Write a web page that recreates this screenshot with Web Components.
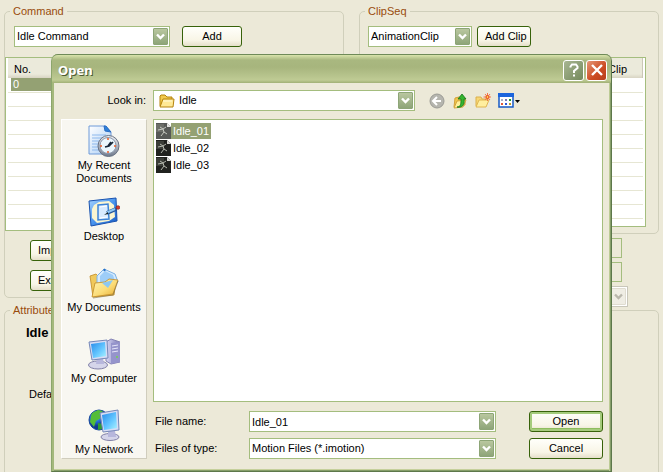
<!DOCTYPE html>
<html lang="en">
<head>
<meta charset="utf-8">
<title>Open</title>
<style>
html,body{margin:0;height:100%;background:#ece9d8}
body{font:11px/13px "Liberation Sans",Arial,sans-serif;color:#000;overflow:hidden}
</style>
</head>
<body>
<clip-editor></clip-editor>
<script>
const define=(name,html,setup)=>{
  const t=document.createElement('template');
  t.innerHTML='<style>*{box-sizing:border-box}:host{box-sizing:border-box}</style>'+html;
  customElements.define(name,class extends HTMLElement{
    constructor(){super();this.attachShadow({mode:'open'}).append(t.content.cloneNode(true));}
    connectedCallback(){if(setup&&!this.ready){this.ready=true;setup(this,this.shadowRoot);}}
  });
};

const ICONS={
recent:`<svg viewBox="0 0 32 32" width="32" height="32"><defs><linearGradient id="a" x2="1" y2="1"><stop stop-color="#fff"/><stop offset="1" stop-color="#a9cdf5"/></linearGradient><linearGradient id="b" x2="0" y2="1"><stop stop-color="#f4f5f8"/><stop offset="1" stop-color="#6f7a8c"/></linearGradient></defs>
<path d="M1 1h16l6 6v22H1z" fill="url(#a)" stroke="#6f9ad8"/><path d="M16 1h2l5 6-6-1z" fill="#2f80d8" stroke="#2a6cc4"/><path d="M4 10h14M4 13h11M4 16h7M4 19h6M4 22h6M4 25h7" stroke="#8db8ec"/>
<circle cx="20.500" cy="21" r="10.500" fill="url(#b)" stroke="#687182"/><circle cx="20" cy="20.500" r="8" fill="#eaf6fd" stroke="#8793a7"/><path d="M20 13v2M20 26v2M12 21h2M26 21h2" stroke="#ee5a22" stroke-width="1.500"/><path d="M17 22l4-1 4-4M20 21l3-4" stroke="#172637" stroke-width="1.700" fill="none"/></svg>`,
desktop:`<svg viewBox="0 0 32 32" width="32" height="32"><defs><linearGradient id="a" x2="1" y2="1"><stop stop-color="#a8d5ff"/><stop offset=".5" stop-color="#4a95ee"/><stop offset="1" stop-color="#1558c2"/></linearGradient></defs>
<path d="M1 5L28 2l1 23-26 5z" fill="url(#a)" stroke="#1a53af"/><path d="M6 9l5-3 10-1 5 4 1 12-6 4-12 2-5-5V13z" fill="#fbf6d1"/><path d="M10 9l10-1 1 15-11 1z" fill="#d7ebff" stroke="#3c84d7" stroke-width="1.500"/><path d="M12 11l7-1M12 22l7-1" stroke="#fff"/><path d="M19 17l9-4" stroke="#24569b" stroke-width="4"/><path d="M19 16.500l8-3.500" stroke="#8ec6f3" stroke-width="2"/><path d="M16 19l4-3v2z" fill="#112222"/><circle cx="30" cy="11.500" r="1.800" fill="#d63b2c" stroke="#87221c" stroke-width=".7"/></svg>`,
docs:`<svg viewBox="0 0 32 32" width="32" height="32"><defs><linearGradient id="a" x2="1" y2="1"><stop stop-color="#fff5b5"/><stop offset=".55" stop-color="#fbdc77"/><stop offset="1" stop-color="#e5aa2e"/></linearGradient></defs>
<path d="M2 9l6-2 3 3 17 2-2 16-21 2z" fill="#f0c95c" stroke="#c28a24" stroke-width=".8"/><path d="M9 9l7-7 11 5 3 8-13 8-8-7z" fill="#d5ebff" stroke="#7db1e4"/><path d="M12 9l5-5 8 4 2 6-9 6-6-5z" fill="#9dcdf8"/><circle cx="16.500" cy="3" r="1.200" fill="#2771c8"/><path d="M4 30l3-14 10-1 4-3 9 1-5 14z" fill="url(#a)" stroke="#c28a24" stroke-width=".8"/><path d="M14 16l11-3-5 8z" fill="#8cc8f3"/><path d="M5 31l20-3 5-14" fill="none" stroke="#807349" opacity=".6"/></svg>`,
computer:`<svg viewBox="0 0 32 32" width="32" height="32"><defs><linearGradient id="a" x2="1" y2="1"><stop stop-color="#278be9"/><stop offset=".55" stop-color="#63c5ff"/><stop offset="1" stop-color="#aaf2ff"/></linearGradient><linearGradient id="b"><stop stop-color="#d9d8f5"/><stop offset="1" stop-color="#7877b4"/></linearGradient></defs>
<path d="M18 4l5-3 9 3v20l-9 2-5-3z" fill="url(#b)" stroke="#8583b4"/><path d="M23 5l9-1v20l-9 2z" fill="#9594cb"/><path d="M24 8l6-1M24 11l6-1M24 14l6-1" stroke="#e7e7fa"/><circle cx="29" cy="19" r="1" fill="#6fd44c"/>
<ellipse cx="10" cy="27" rx="9.500" ry="4" fill="#d5d5ea" stroke="#8180a7"/><path d="M9 20h6l1 6H8z" fill="#b7b7dc"/><path d="M1 4l18-2 1 18-16 2z" fill="#d6dcf5" stroke="#7587b8"/><path d="M3 6l14-2 1 14-13 2z" fill="url(#a)"/></svg>`,
network:`<svg viewBox="0 0 32 32" width="32" height="32"><defs><linearGradient id="a" x2="1" y2="1"><stop stop-color="#278be9"/><stop offset=".55" stop-color="#63c5ff"/><stop offset="1" stop-color="#aaf2ff"/></linearGradient><radialGradient id="b" cx=".35" cy=".3"><stop stop-color="#91d8ff"/><stop offset=".5" stop-color="#2878e0"/><stop offset="1" stop-color="#103991"/></radialGradient></defs>
<circle cx="11" cy="11" r="10" fill="url(#b)" stroke="#17499d"/><path d="M4 4l6-3 5 1-3 3 1 4-5 3-2 6-4-5 1-6z" fill="#53bd38"/><path d="M10 14l5 1-1 5-4 1z" fill="#309b36"/>
<ellipse cx="22" cy="28" rx="9" ry="3.500" fill="#d5d5ea" stroke="#8180a7"/><path d="M20 22h7l1 6h-8z" fill="#b7b7dc"/><path d="M12 4l18-3 1 20-16 2z" fill="#d6dcf5" stroke="#7587b8"/><path d="M14 6l14-3 1 16-13 2z" fill="url(#a)"/></svg>`,
folder:`<svg viewBox="0 0 16 16" width="16" height="16"><path d="M1 13V3l1-1h4l2 2h5v3" fill="#f1c94d" stroke="#b5830c"/><path d="M1 14L4 6h11l-1 8z" fill="#ffe995" stroke="#b5830c" stroke-linejoin="round"/><path d="M4 8h9" stroke="#fffbdc"/></svg>`,
back:`<svg viewBox="0 0 16 16" width="16" height="16"><circle cx="8" cy="8" r="7" fill="#b5b5ae" stroke="#9b9b95"/><path d="M12 8H5M8 4L4 8l4 4" fill="none" stroke="#fff" stroke-width="2"/></svg>`,
up:`<svg viewBox="0 0 16 16" width="16" height="16"><path d="M2 14l1-9 4-1 6 1v7z" fill="#f0c64c" stroke="#d3a23a"/><path d="M2 15l3-7 9-1-3 7z" fill="#fff09a" stroke="#d3a23a"/><path d="M5 14c4 0 4-4 4-8H6l4-5 4 5h-2c1 6-2 9-7 8z" fill="#35b52f" stroke="#13761a" stroke-width=".8"/></svg>`,
make:`<svg viewBox="0 0 16 16" width="16" height="16"><path d="M1 13V4h5l1 2h5v3" fill="#f7d775" stroke="#dbb04c"/><path d="M1 14l3-7h10l-3 7z" fill="#ffef9f" stroke="#dfb650"/><path d="M12.500 0v8M8.500 4h8M10 1l5 6M15 1l-5 6" stroke="#f5744a"/><circle cx="12.500" cy="4" r="1.500" fill="#ffd34a" stroke="#e94b22"/></svg>`,
views:`<svg viewBox="0 0 23 16" width="23" height="16"><path d="M1 1h14v13H1z" fill="#fff" stroke="#1659c5" stroke-width="1.500"/><path d="M0 0h16v4H0z" fill="#1c65dc"/><path d="M3 6h2v2H3z" fill="#a9b0c7"/><path d="M7 6h2v2H7z" fill="#7777b4"/><path d="M11 6h2v2h-2z" fill="#199b31"/><path d="M3 10h2v2H3z" fill="#e15a38"/><path d="M7 10h2v2H7z" fill="#2b5cd7"/><path d="M11 10h2v2h-2z" fill="#c39926"/><path d="M17 7h5l-2.500 3z"/></svg>`,
motion:`<svg viewBox="0 0 15 16" width="15" height="16"><path d="M0 0h11l4 4v12H0z" fill="#20221f"/><path d="M11 0v4h4z" fill="#dcdcd8"/><path d="M0 1h8v8H0z" fill="#555951" opacity=".5"/><path d="M4 4l3 2 3-2M7 6l1 3 3 2M8 9l-3 4M2 7l5-1" stroke="#b4b8ae" fill="none"/></svg>`,
chevron:`<svg viewBox="0 0 9 7" width="9" height="7"><path d="M1 1.500l3.500 3.500L8 1.500" fill="none" stroke="currentColor" stroke-width="2.400"/></svg>`,
help:`<svg viewBox="0 0 14 14" width="14" height="14"><path d="M3.500 4.500V3.500l1.500-2h4l1.500 2v1.500L7 8v2" fill="none" stroke="#fff" stroke-width="2"/><path d="M6 11.500h2v2H6z" fill="#fff"/></svg>`,
close:`<svg viewBox="0 0 14 14" width="14" height="14"><path d="M2 2l10 10M12 2L2 12" stroke="#fff" stroke-width="2.400"/></svg>`
};
define('xp-icon','<style>:host{display:inline-flex;flex:none}svg{display:block}</style><span aria-hidden="true"></span>',(h,r)=>{r.querySelector('span').innerHTML=ICONS[h.getAttribute('name')];});

define('xp-button',`<style>
:host{display:inline-flex;height:21px}
button{flex:1;min-width:0;font:inherit;color:inherit;padding:0 7px;border:1px solid #37620a;border-radius:3px;background:linear-gradient(#fffffb,#f8f5e6 70%,#e5dfca);white-space:nowrap}
:host([primary]) button{box-shadow:inset 0 0 0 2px #a5cb7c,inset 0 -3px 0 #8fbd5e}
</style><button type="button"><slot></slot></button>`);

define('xp-combo',`<style>
:host{display:flex;align-items:center;min-width:0}
label{flex:none;width:var(--label,auto);text-align:var(--label-align,left);padding-right:var(--label-gap,0)}
label:empty{display:none}
.box{flex:1;min-width:0;display:flex;align-items:center;height:21px;border:1px solid #a4bd7e;background:#fff;padding:0 1px 0 2px}
select,input{appearance:none;flex:1;min-width:0;width:0;height:19px;border:0;padding:0;margin:0;background:none;font:inherit;color:inherit;outline:0}
::slotted(xp-icon){margin:0 4px 0 3px}
.arrow{flex:none;display:flex;align-items:center;justify-content:center;width:15px;height:17px;border:1px solid #8da577;border-radius:1px;background:linear-gradient(#b9c79f,#8ea579);color:#fff}
:host([off]) .box{border-color:#c9c7ba}
:host([off]) .arrow{border-color:#dfdcd0;background:#efede4;color:#b9b7ac}
</style><label for="c"></label><span class="box"><slot></slot><span class="arrow"><xp-icon name="chevron"></xp-icon></span></span>`,(h,r)=>{
  r.querySelector('label').textContent=h.getAttribute('label')||'';
  const e=h.hasAttribute('editable'),c=document.createElement(e?'input':'select');
  c.id='c';
  const v=h.getAttribute('value')||'';
  if(e)c.value=v;else c.append(new Option(v,v,true,true));
  if(!h.getAttribute('label'))c.setAttribute('aria-label',h.getAttribute('name'));
  c.disabled=h.hasAttribute('off');
  r.querySelector('.arrow').before(c);
});

define('group-box',`<style>
:host{display:flex;min-width:0}
fieldset{flex:1;min-width:0;margin:0;padding:8px 0 6px;border:1px solid #d0cfbb;border-radius:5px}
legend{margin-left:5px;padding:0 3px;line-height:14px;color:#994c0c}
</style><fieldset><legend></legend><slot></slot></fieldset>`,(h,r)=>{r.querySelector('legend').textContent=h.getAttribute('heading');});

define('list-view',`<style>
:host{display:block;overflow:hidden;border:1px solid #a4bd7e;background:#fff;padding:0 2px}
table{width:100%;border-collapse:collapse;table-layout:fixed}
th{height:20px;padding:2px var(--head-pad,6px) 0;font-weight:400;text-align:var(--head,left);background:linear-gradient(#ebeadb 16px,#d8d4c3);border-right:1px solid #cbc7b8}
td{height:14px;padding:0 0 0 3px;border-bottom:1px solid #e6e6d3;line-height:13px}
td span{display:block;background:#94a173;color:#fff;padding-left:2px}
</style><table><thead><tr><th scope="col"></th></tr></thead><tbody></tbody></table>`,(h,r)=>{
  r.querySelector('th').textContent=h.getAttribute('column');
  const b=r.querySelector('tbody'),first=h.getAttribute('first');
  for(let i=0;i<11;i++){const td=b.insertRow().insertCell();if(!i&&first){const s=document.createElement('span');s.textContent=first;td.append(s);}}
});

define('place-item',`<style>
:host{display:block;text-align:center}
a{display:flex;flex-direction:column;align-items:center;gap:2px;color:inherit;text-decoration:none}
</style><a href="#"><slot name="icon"></slot><span><slot></slot></span></a>`);

define('places-bar',`<style>
:host{display:block;background:#f8f7f1;border:1px solid #fff;border-right-color:#d0cdbd;border-bottom-color:#d0cdbd;overflow:hidden}
nav{display:grid;grid-template-rows:repeat(4,71px) 47px;padding-top:5px}
</style><nav aria-label="Places">
<place-item><xp-icon slot="icon" name="recent"></xp-icon>My Recent<br>Documents</place-item>
<place-item><xp-icon slot="icon" name="desktop"></xp-icon>Desktop</place-item>
<place-item><xp-icon slot="icon" name="docs"></xp-icon>My Documents</place-item>
<place-item><xp-icon slot="icon" name="computer"></xp-icon>My Computer</place-item>
<place-item><xp-icon slot="icon" name="network"></xp-icon>My Network</place-item></nav>`);

define('file-item',`<style>
:host{display:flex;align-items:center;height:17px}
span{line-height:16px;padding:0 2px}
:host([selected]) span{background:#94a173;color:#fff}
:host([selected]) xp-icon{opacity:.75}
</style><xp-icon name="motion"></xp-icon><span><slot></slot></span>`);

define('file-list',`<style>
:host{display:block;background:#fff;border:1px solid #a4bd7e;padding:2px;height:283px}
</style><slot></slot>`);

define('tool-button',`<style>
:host{display:inline-flex}
button{border:0;background:none;padding:0;display:flex}
</style><button type="button"><slot></slot></button>`,(h,r)=>{r.querySelector('button').setAttribute('aria-label',h.getAttribute('name'));});

define('title-bar',`<style>
:host{display:flex;align-items:center;gap:2px;height:29px;padding:2px 4px 0 6px;border-radius:6px 6px 0 0;border-top:1px solid #6f8a58;
background:linear-gradient(#d9e3ab,#a9b880 5px,#a7b57d 12px,#b5c28b 20px,#bfcb94 25px,#a0b075)}
h1{flex:1;margin:0;font:bold 13px/18px "Noto Sans","Open Sans",sans-serif;color:#fff;text-shadow:1px 1px 0 #4b5a33}
button{display:flex;align-items:center;justify-content:center;width:21px;height:21px;padding:0;border:1px solid #fff;border-radius:3px;background:linear-gradient(135deg,#a8b692,#74895b)}
.close{background:linear-gradient(135deg,#e59676,#cc4b22 60%,#b6401d)}
</style><h1><slot></slot></h1><button type="button" aria-label="Help"><xp-icon name="help"></xp-icon></button><button type="button" class="close" aria-label="Close"><xp-icon name="close"></xp-icon></button>`);

define('open-dialog',`<style>
:host{display:block;background:#ece9d8;border-radius:7px 7px 0 0;
border:solid;border-width:0 1px 1px;border-color:#8ca66c #5d784b #5d784b #8ca66c;box-shadow:inset 2px 0 #a4b87c,inset -1px 0 #869e6a,inset -2px 0 #bccb95,inset 0 -1px #869e6a,inset 0 -2px #c5d09b}
.body{display:grid;grid-template-columns:86px minmax(0,1fr);column-gap:6px;padding:7px 8px 12px 9px}
.tools{grid-column:1/3;display:flex;align-items:center;gap:7px;padding-right:82px;margin-bottom:8px}
.tools xp-combo{flex:1;margin-right:7px;--label:92px;--label-align:right;--label-gap:7px}
.fields{display:grid;grid-template-columns:minmax(0,1fr) 74px;column-gap:33px;row-gap:6px;padding:9px 0 0 2px}
.fields xp-combo{--label:94px}
</style>
<title-bar>Open</title-bar>
<div class="body" role="dialog" aria-label="Open">
<div class="tools"><xp-combo label="Look in:" value="Idle"><xp-icon name="folder"></xp-icon></xp-combo>
<tool-button name="Back"><xp-icon name="back"></xp-icon></tool-button><tool-button name="Up one level"><xp-icon name="up"></xp-icon></tool-button><tool-button name="New folder"><xp-icon name="make"></xp-icon></tool-button><tool-button name="Views"><xp-icon name="views"></xp-icon></tool-button></div>
<places-bar></places-bar>
<div><file-list><file-item selected>Idle_01</file-item><file-item>Idle_02</file-item><file-item>Idle_03</file-item></file-list>
<div class="fields"><xp-combo editable label="File name:" value="Idle_01"></xp-combo><xp-button primary>Open</xp-button>
<xp-combo label="Files of type:" value="Motion Files (*.imotion)"></xp-combo><xp-button>Cancel</xp-button></div></div>
</div>`);

define('clip-editor',`<style>
:host{display:block;position:relative;height:100vh;overflow:hidden;padding:4px 4px 0}
.cols{display:grid;grid-template-columns:340fr 300fr;column-gap:15px;align-items:start}
.row{display:flex;padding:0 9px;margin-bottom:10px}
.cmd xp-combo{width:156px;margin-right:12px}.cmd xp-button{width:60px}
.seq{padding-left:8px}
.seq xp-combo{width:104px;margin-right:5px}.seq xp-button{width:54px}
.seq xp-button,.cmd xp-button{flex:none}
.left{height:174px}
.right{height:170px;margin:0 12px 0 8px;--head:right;--head-pad:15px}
.stack{display:flex;flex-direction:column;align-items:flex-start;gap:9px;padding:9px 0 0 25px}
.extra{display:flex;flex-direction:column;align-items:flex-end;gap:4px;padding:4px 31px 0 0}
.extra input{width:120px;height:20px;margin:0 6px 0 0;border:1px solid #a4bd7e;background:none;padding:0 3px;font:inherit}
.extra xp-combo{width:126px}
.attr{margin-top:-4px}
.attr div{height:200px;padding:0 0 0 21px}
h2{margin:0 0 47px;font:bold 13px/16px "Liberation Sans",sans-serif}
p{margin:0;padding-left:3px}
open-dialog{position:absolute;top:54px;left:51px;right:51px}
</style>
<div class="cols">
<group-box heading="Command"><div class="row cmd"><xp-combo name="Command" value="Idle Command"></xp-combo><xp-button>Add</xp-button></div>
<list-view class="left" column="No." first="0"></list-view>
<div class="stack"><xp-button>Import</xp-button><xp-button>Export</xp-button></div></group-box>
<div><group-box heading="ClipSeq"><div class="row seq"><xp-combo name="Clip type" value="AnimationClip"></xp-combo><xp-button>Add Clip</xp-button></div>
<list-view class="right" column="Clip"></list-view></group-box>
<div class="extra"><input aria-label="Start"><input aria-label="End"><xp-combo off name="Mode"></xp-combo></div></div>
</div>
<group-box class="attr" heading="Attribute"><div><h2>Idle</h2><p>Default</p></div></group-box>
<open-dialog></open-dialog>`);
</script>
</body>
</html>
